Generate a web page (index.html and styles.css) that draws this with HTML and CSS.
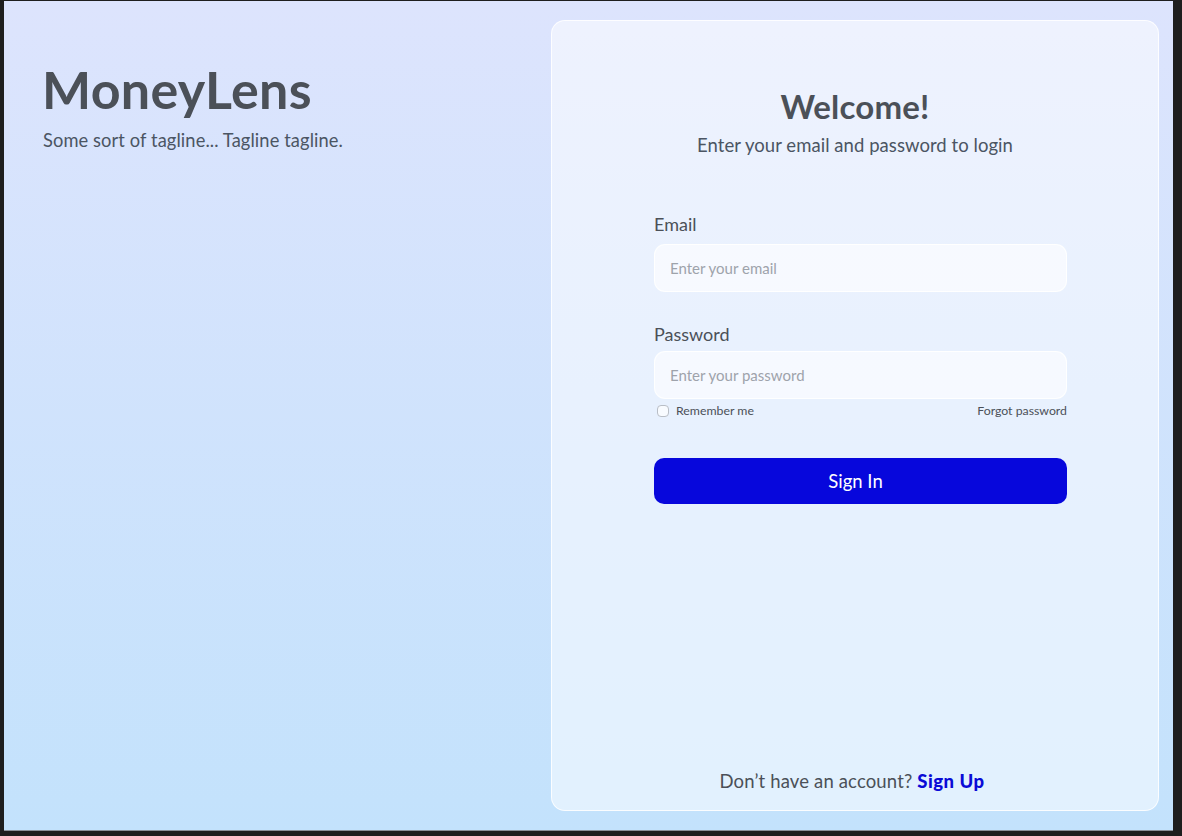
FILE: index.html
```html
<!DOCTYPE html>
<html lang="en">
<head>
<meta charset="utf-8">
<title>MoneyLens – Login</title>
<link rel="stylesheet" href="styles.css">
</head>
<body>
<div class="window">
  <section class="brand">
    <h1 class="brand-title">MoneyLens</h1>
    <p class="brand-tagline">Some sort of tagline... Tagline tagline.</p>
  </section>
  <main class="card">
    <header class="card-head">
      <h2 class="card-title">Welcome!</h2>
      <p class="card-sub">Enter your email and password to login</p>
    </header>
    <form class="form">
      <label class="field-label field-label-email" for="email">Email</label>
      <input class="field-input" id="email" type="email" placeholder="Enter your email">
      <label class="field-label field-label-password" for="password">Password</label>
      <input class="field-input" id="password" type="password" placeholder="Enter your password">
      <div class="form-row">
        <label class="remember"><span class="check"></span>Remember me</label>
        <a class="forgot" href="#">Forgot password</a>
      </div>
      <button class="btn" type="button">Sign In</button>
    </form>
    <p class="signup">Don’t have an account? <a class="signup-link" href="#">Sign Up</a></p>
  </main>
</div>
</body>
</html>
```
FILE: styles.css
```css
* { box-sizing: border-box; }
html, body { margin: 0; padding: 0; }
body {
  background: #1e1e1e;
  font-family: "Lato", "Noto Sans", sans-serif;
  color: #4b5058;
  height: 836px;
  overflow: hidden;
}
.window {
  margin: 1px 9px 0 4px;
  height: 830px;
  background: linear-gradient(180deg, #dde4fd 0%, #c3e2fc 100%);
  display: flex;
  align-items: flex-start;
  border-bottom: 1px solid #8a9099;
}
.brand {
  flex: 1;
  padding: 57px 0 0 38px;
}
.brand-title {
  margin: 0;
  font-size: 52px;
  line-height: 62px;
  font-weight: 700;
  color: #4b5058;
  letter-spacing: 0.3px;
}
.brand-tagline {
  margin: 8px 0 0 1px;
  font-size: 18.3px;
  line-height: 24px;
  color: #4b5563;
  letter-spacing: 0.1px;
}
.card {
  width: 608px;
  height: 791px;
  margin: 19px 14px 0 0;
  border: 1px solid rgba(255, 255, 255, 0.85);
  border-radius: 14px;
  background: rgba(255, 255, 255, 0.5);
  display: flex;
  flex-direction: column;
}
.card-head {
  padding-top: 65px;
  text-align: center;
}
.card-title {
  margin: 0;
  font-size: 33px;
  line-height: 40px;
  font-weight: 700;
  color: #4b5058;
  letter-spacing: 0.2px;
}
.card-sub {
  margin: 7px 0 0;
  font-size: 18.5px;
  line-height: 24px;
  color: #4b5563;
  letter-spacing: 0.05px;
}
.form {
  margin: 55px 0 0 102px;
  width: 413px;
  display: flex;
  flex-direction: column;
}
.field-label {
  font-size: 18px;
  line-height: 24px;
  color: #4b5058;
}
.field-label-email { margin-bottom: 8px; }
.field-label-password { margin-top: 30px; margin-bottom: 5px; }
.field-input {
  height: 48px;
  border: 1px solid rgba(255, 255, 255, 0.9);
  border-radius: 11px;
  background: rgba(255, 255, 255, 0.6);
  padding: 0 15px;
  font-family: inherit;
  font-size: 15px;
  color: #4b5058;
  outline: none;
}
.field-input::placeholder { color: #9ea3ab; }
.form-row {
  margin-top: 4px;
  display: flex;
  justify-content: space-between;
  align-items: center;
  font-size: 12.3px;
  line-height: 16px;
}
.remember {
  display: flex;
  align-items: center;
  gap: 7px;
  padding-left: 3px;
  color: #4b5058;
}
.check {
  width: 12px;
  height: 12px;
  border: 1px solid #b9bec6;
  border-radius: 4px;
  background: rgba(255, 255, 255, 0.7);
}
.forgot {
  color: #4b5058;
  text-decoration: none;
}
.btn {
  margin-top: 39px;
  height: 46px;
  border: none;
  border-radius: 10px;
  background: #0707dc;
  color: #ffffff;
  font-family: inherit;
  font-size: 18.5px;
  padding: 0 10px 0 0;
}
.signup {
  margin: auto 0 17px;
  text-align: center;
  font-size: 18.5px;
  line-height: 24px;
  color: #4b5058;
  padding-right: 6px;
  letter-spacing: 0.15px;
}
.signup-link {
  color: #0a0ad6;
  font-weight: 900;
  text-decoration: none;
  letter-spacing: 0.5px;
}
```
